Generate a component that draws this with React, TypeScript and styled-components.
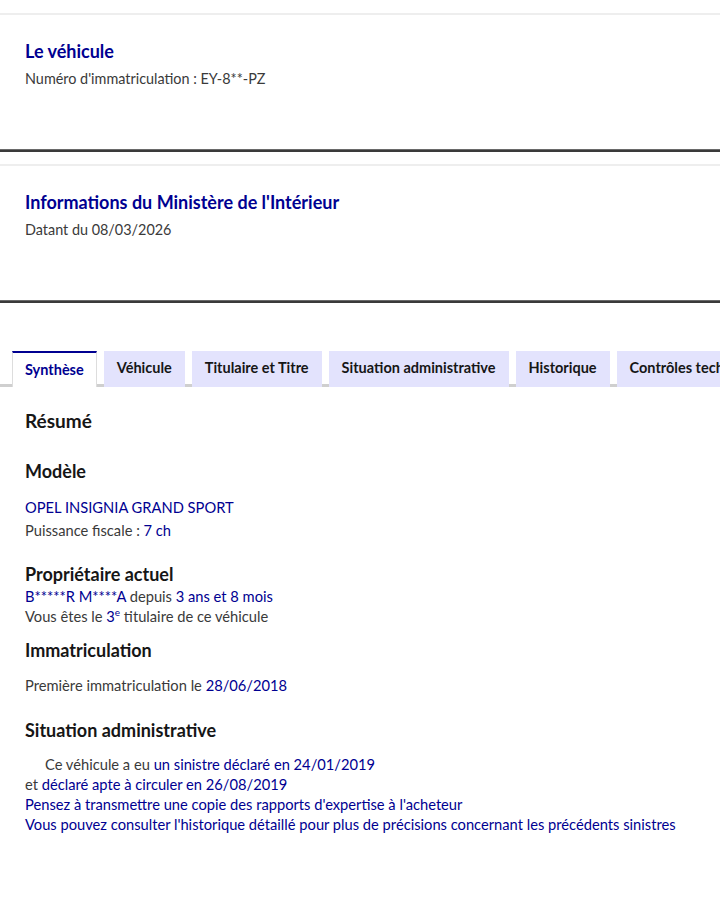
import styled, { createGlobalStyle } from "styled-components";

const GlobalStyle = createGlobalStyle`
  html, body {
    margin: 0;
    padding: 0;
    background: #ffffff;
    overflow-x: hidden;
  }
  body {
    font-family: Lato, "Noto Sans", sans-serif;
    color: #3a3a3a;
  }
`;

const tabs = [
  { text: "Synthèse", value: "synthese" },
  { text: "Véhicule", value: "vehicule" },
  { text: "Titulaire et Titre", value: "titulaire" },
  { text: "Situation administrative", value: "situation" },
  { text: "Historique", value: "historique" },
  { text: "Contrôles techniques", value: "controles" },
];

const App = () => {
  const activeTab = "synthese";

  return (
    <Page>
      <GlobalStyle />
      <LightRule $top={13} />
      <Header>
        <HeaderTitle>Le véhicule</HeaderTitle>
        <HeaderText>Numéro d'immatriculation : EY-8**-PZ</HeaderText>
      </Header>
      <HeavyRule />
      <LightRule $top={12} />
      <Header>
        <HeaderTitle>Informations du Ministère de l'Intérieur</HeaderTitle>
        <HeaderText>Datant du 08/03/2026</HeaderText>
      </Header>
      <HeavyRule />

      <TabBar>
        {tabs.map(tab => (
          <Tab key={tab.value} $active={activeTab === tab.value}>
            {tab.text}
          </Tab>
        ))}
      </TabBar>

      <Content>
        <PanelTitle>Résumé</PanelTitle>

        <Heading $gap={26}>Modèle</Heading>
        <Line $gap={13} $tall>
          <Hi>OPEL INSIGNIA GRAND SPORT</Hi>
        </Line>
        <Line $tall>
          Puissance fiscale : <Hi>7 ch</Hi>
        </Line>

        <Heading $gap={20}>Propriétaire actuel</Heading>
        <Line>
          <Hi>B*****R M****A</Hi> depuis <Hi>3 ans et 8 mois</Hi>
        </Line>
        <Line>
          Vous êtes le <Hi>3<sup>e</sup></Hi> titulaire de ce véhicule
        </Line>

        <Heading $gap={12}>Immatriculation</Heading>
        <Line $gap={13}>
          Première immatriculation le <Hi>28/06/2018</Hi>
        </Line>

        <Heading $gap={23}>Situation administrative</Heading>
        <Line $gap={12} $indent>
          Ce véhicule a eu <Hi>un sinistre déclaré en 24/01/2019</Hi>
        </Line>
        <Line>
          et <Hi>déclaré apte à circuler en 26/08/2019</Hi>
        </Line>
        <Line>
          <Hi>Pensez à transmettre une copie des rapports d'expertise à l'acheteur</Hi>
        </Line>
        <Line>
          <Hi>
            Vous pouvez consulter l'historique détaillé pour plus de précisions
            concernant les précédents sinistres
          </Hi>
        </Line>
      </Content>
    </Page>
  );
};

export default App;

const Page = styled.div`
  width: 720px;
  min-height: 900px;
  overflow: hidden;
  padding-bottom: 60px;
  box-sizing: border-box;
`;

const LightRule = styled.div<{ $top: number }>`
  margin-top: ${props => props.$top}px;
  height: 2px;
  background: #eeeeee;
`;

const HeavyRule = styled.div`
  height: 3px;
  background: #3a3a3a;
  border-top: 1px solid #6a6a6a;
  box-sizing: border-box;
`;

const Header = styled.div`
  height: 134px;
  padding: 24px 25px 0;
  box-sizing: border-box;
  display: flex;
  flex-direction: column;
  gap: 6px;
`;

const HeaderTitle = styled.h2`
  margin: 0;
  font-size: 18px;
  line-height: 24px;
  font-weight: 700;
  color: #000091;
`;

const HeaderText = styled.p`
  margin: 0;
  font-size: 14.4px;
  line-height: 20px;
  color: #3a3a3a;
`;

const TabBar = styled.div`
  margin-top: 48px;
  width: 676px;
  display: flex;
  gap: 7px;
  padding-left: 12px;
  box-sizing: border-box;
  white-space: nowrap;
  box-shadow: inset 0 -3px 0 #cfcfcf;
`;

const Tab = styled.div<{ $active: boolean }>`
  flex-shrink: 0;
  height: 36px;
  padding: 0 13px 3px;
  box-sizing: border-box;
  display: flex;
  align-items: center;
  font-size: 14.5px;
  font-weight: 700;
  color: ${props => (props.$active ? "#000091" : "#161616")};
  background: ${props => (props.$active ? "#ffffff" : "#e3e3fd")};
  ${props =>
    props.$active &&
    `border-top: 2px solid #000091;
  border-left: 1px solid #dddddd;
  border-right: 1px solid #dddddd;
  padding: 1px 12px 3px;`}
`;

const Content = styled.div`
  padding: 22px 25px 0;
`;

const PanelTitle = styled.h3`
  margin: 0;
  font-size: 19px;
  line-height: 24px;
  font-weight: 700;
  color: #161616;
`;

const Heading = styled.h4<{ $gap: number }>`
  margin: ${props => props.$gap}px 0 0;
  font-size: 18px;
  line-height: 24px;
  font-weight: 700;
  color: #161616;
`;

const Line = styled.p<{ $gap?: number; $tall?: boolean; $indent?: boolean }>`
  margin: ${props => props.$gap || 0}px 0 0;
  font-size: 14.7px;
  line-height: ${props => (props.$tall ? 23 : 20)}px;
  color: #3a3a3a;
  padding-left: ${props => (props.$indent ? 20 : 0)}px;
  white-space: nowrap;

  sup {
    font-size: 10px;
    line-height: 0;
  }
`;

const Hi = styled.span`
  color: #000091;
`;
